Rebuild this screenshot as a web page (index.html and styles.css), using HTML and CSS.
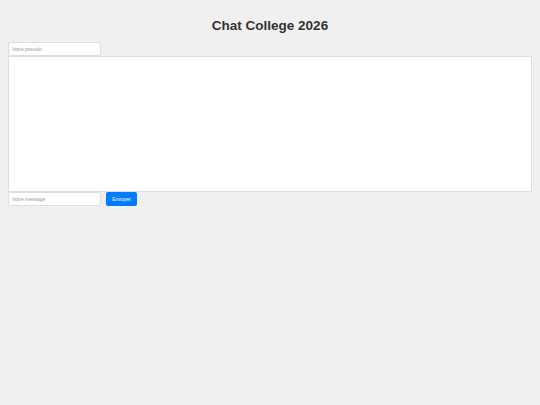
FILE: index.html
```html
<!DOCTYPE html>
<html lang="fr">
<head>
<meta charset="utf-8">
<title>Chat College 2026</title>
<link rel="stylesheet" href="styles.css">
</head>
<body>
<h1 class="title">Chat College 2026</h1>
<input class="field pseudo" type="text" placeholder="Votre pseudo">
<div class="messages"></div>
<div class="composer">
  <input class="field message" type="text" placeholder="Votre message">
  <button class="send">Envoyer</button>
</div>
</body>
</html>
```
FILE: styles.css
```css
html, body {
  background: #f0f0f0;
}
body {
  margin: 8px;
  font-family: "Liberation Sans", Arial, sans-serif;
}
.title {
  margin: 10px 0 8px;
  height: 16px;
  line-height: 16px;
  font-size: 13.5px;
  font-weight: bold;
  color: #333;
  text-align: center;
}
.field {
  display: block;
  box-sizing: border-box;
  width: 93px;
  height: 14px;
  margin: 0;
  padding: 0 3px;
  border: 1px solid #ddd;
  border-radius: 2px;
  background: #fff;
  font-family: "Liberation Sans", Arial, sans-serif;
  font-size: 5px;
  color: #333;
  outline: none;
}
.field::placeholder {
  color: #999;
}
.messages {
  box-sizing: border-box;
  height: 136px;
  border: 1px solid #ddd;
  background: #fff;
}
.composer {
  display: flex;
  gap: 5px;
}
.send {
  box-sizing: border-box;
  width: 31px;
  height: 14px;
  margin: 0;
  padding: 0;
  border: none;
  border-radius: 2px;
  background: #007bff;
  color: #fff;
  font-family: "Liberation Sans", Arial, sans-serif;
  font-size: 5px;
}
```
